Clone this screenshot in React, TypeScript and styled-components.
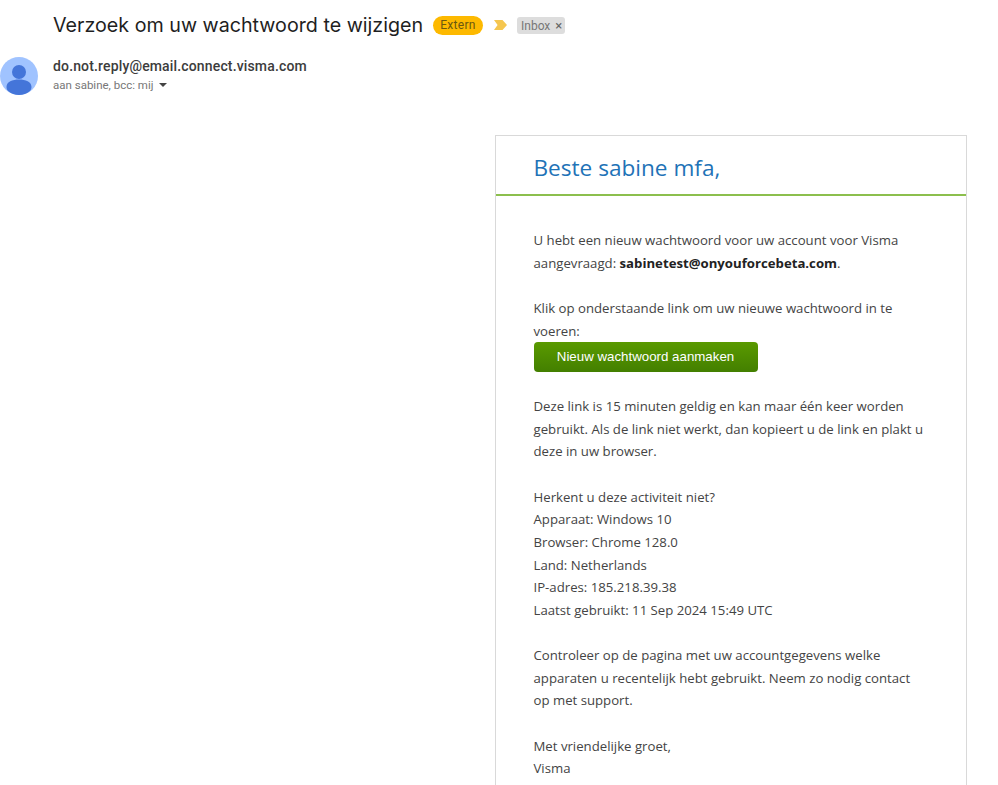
import React from 'react';
import styled, { createGlobalStyle } from 'styled-components';

const GlobalStyle = createGlobalStyle`
  html, body {
    margin: 0;
    padding: 0;
    background: #fff;
    overflow: hidden;
  }
  body {
    height: 785px;
    font-family: 'Open Sans', sans-serif;
  }
`;

export default function App() {
  return (
    <Page>
      <GlobalStyle />
      <SubjectRow>
        <Subject>Verzoek om uw wachtwoord te wijzigen</Subject>
        <ExternBadge>Extern</ExternBadge>
        <ImportantMarker viewBox="0 0 13 10">
          <path d="M0 0h8.5L13 5l-4.5 5H0l3.6-5z" fill="#f5c64f" />
        </ImportantMarker>
        <InboxChip>
          Inbox <ChipClose>×</ChipClose>
        </InboxChip>
      </SubjectRow>

      <SenderRow>
        <Avatar viewBox="0 0 38 38">
          <circle cx="19" cy="19" r="19" fill="#a0c3ff" />
          <circle cx="19" cy="15" r="7" fill="#4475d9" />
          <path d="M6.5 30c0-5.5 6-7.6 12.500-7.600S31.500 24.500 31.500 30c0 1.500-.6 3-1.600 4-2.900 2.500-6.700 4-10.900 4s-8-1.500-10.900-4c-1-1-1.600-2.500-1.600-4z" fill="#4475d9" />
        </Avatar>
        <SenderInfo>
          <SenderAddress>do.not.reply@email.connect.visma.com</SenderAddress>
          <Recipients>
            aan sabine, bcc: mij
            <Caret />
          </Recipients>
        </SenderInfo>
      </SenderRow>

      <MailColumn>
        <MailCard>
          <MailHeader>Beste sabine mfa,</MailHeader>
          <MailBody>
            <Paragraph>
              U hebt een nieuw wachtwoord voor uw account voor Visma
              <br />
              aangevraagd: <strong>sabinetest@onyouforcebeta.com</strong>.
            </Paragraph>
            <Paragraph>
              Klik op onderstaande link om uw nieuwe wachtwoord in te
              <br />
              voeren:
              <ActionButton>Nieuw wachtwoord aanmaken</ActionButton>
            </Paragraph>
            <Paragraph>
              Deze link is 15 minuten geldig en kan maar één keer worden
              <br />
              gebruikt. Als de link niet werkt, dan kopieert u de link en plakt u
              <br />
              deze in uw browser.
            </Paragraph>
            <Paragraph>
              Herkent u deze activiteit niet?
              <br />
              Apparaat: Windows 10
              <br />
              Browser: Chrome 128.0
              <br />
              Land: Netherlands
              <br />
              IP-adres: 185.218.39.38
              <br />
              Laatst gebruikt: 11 Sep 2024 15:49 UTC
            </Paragraph>
            <Paragraph>
              Controleer op de pagina met uw accountgegevens welke
              <br />
              apparaten u recentelijk hebt gebruikt. Neem zo nodig contact
              <br />
              op met support.
            </Paragraph>
            <Paragraph>
              Met vriendelijke groet,
              <br />
              Visma
            </Paragraph>
          </MailBody>
        </MailCard>
      </MailColumn>
    </Page>
  );
}

const Page = styled.div`
  width: 998px;
  height: 785px;
  overflow: hidden;
  background: #fff;
  display: flex;
  flex-direction: column;
`;

const SubjectRow = styled.div`
  display: flex;
  flex: none;
  align-items: center;
  height: 50px;
  padding-left: 53px;
`;

const Subject = styled.h1`
  margin: 0;
  width: 371px;
  font-family: 'Inter', sans-serif;
  font-size: 19.7px;
  font-weight: 400;
  color: #1f1f1f;
  white-space: nowrap;
`;

const ExternBadge = styled.span`
  margin-left: 9px;
  width: 50px;
  height: 19px;
  border-radius: 10px;
  background: #fdb900;
  color: #6a5710;
  font-family: 'Roboto', sans-serif;
  font-size: 12px;
  letter-spacing: 0.3px;
  line-height: 19px;
  text-align: center;
`;

const ImportantMarker = styled.svg`
  margin-left: 11px;
  width: 13px;
  height: 10px;
`;

const InboxChip = styled.span`
  margin-left: 10px;
  width: 48px;
  box-sizing: border-box;
  height: 17px;
  padding: 0 4px;
  border-radius: 3px;
  background: #dddddd;
  color: #777;
  font-family: 'Roboto', sans-serif;
  font-size: 12px;
  line-height: 17px;
  white-space: nowrap;
`;

const ChipClose = styled.span`
  color: #666;
  font-size: 13px;
  margin-left: 2px;
`;

const SenderRow = styled.div`
  display: flex;
  flex: none;
  align-items: flex-start;
  margin-top: 7px;
`;

const Avatar = styled.svg`
  width: 38px;
  height: 38px;
  flex: none;
`;

const SenderInfo = styled.div`
  margin-left: 15px;
  margin-top: -1px;
  display: flex;
  flex-direction: column;
`;

const SenderAddress = styled.div`
  font-family: 'Roboto', sans-serif;
  font-size: 14px;
  font-weight: 500;
  line-height: 20px;
  color: #3c3c3c;
  letter-spacing: 0.15px;
`;

const Recipients = styled.div`
  display: flex;
  align-items: center;
  font-family: 'Roboto', sans-serif;
  font-size: 11.5px;
  line-height: 16px;
  color: #777;
  margin-top: 1px;
`;

const Caret = styled.span`
  margin-left: 5px;
  width: 0;
  height: 0;
  border-left: 4px solid transparent;
  border-right: 4px solid transparent;
  border-top: 4px solid #444;
`;

const MailColumn = styled.div`
  display: flex;
  flex: none;
  justify-content: flex-end;
  padding-right: 31px;
  margin-top: 40px;
`;

const MailCard = styled.div`
  width: 470px;
  flex: none;
  border: 1px solid #d9d9d9;
  background: #fff;
`;

const MailHeader = styled.div`
  height: 58px;
  padding-left: 37.5px;
  border-bottom: 2px solid #8cbf4d;
  font-size: 22.6px;
  line-height: 63px;
  color: #1f73b7;
`;

const MailBody = styled.div`
  padding: 33px 37.5px 0;
  font-size: 13.2px;
  line-height: 22.66px;
  color: #444;
`;

const Paragraph = styled.p`
  margin: 0 0 22.66px;
  white-space: nowrap;

  strong {
    font-weight: 700;
    color: #222;
  }
`;

const ActionButton = styled.div`
  width: 224px;
  height: 30px;
  border-radius: 4px;
  background: linear-gradient(#5a9a00, #437f00);
  color: #fff;
  font-family: 'Liberation Sans', sans-serif;
  font-size: 13.3px;
  line-height: 30px;
  text-align: center;
`;
